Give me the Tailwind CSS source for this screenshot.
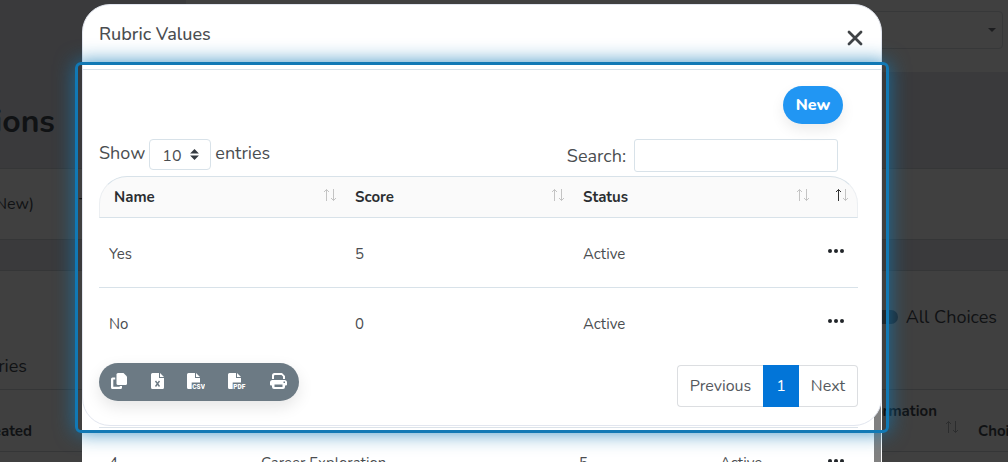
<!DOCTYPE html>
<html lang="en">
<head>
  <meta charset="UTF-8">
  <meta name="viewport" content="width=device-width, initial-scale=1.0">
  <title>Rubric Values</title>
  <script src="https://cdn.jsdelivr.net/npm/@tailwindcss/browser@4"></script>
</head>
<body class="relative h-screen overflow-hidden bg-[#3a3a3c] font-['Nunito','Lato',sans-serif] text-[#4a4d50]">

  <!-- icons -->
  <svg class="hidden">
    <symbol id="sort" viewBox="0 0 14 14">
      <path d="M3.500 13V1.500M1 4l2.500-2.500L6 4" fill="none" stroke="currentColor" />
    </symbol>
    <symbol id="sort-down" viewBox="0 0 14 14">
      <path d="M10.500 1v11.500M8 10l2.500 2.500L13 10" fill="none" stroke="currentColor" />
    </symbol>
    <symbol id="dots" viewBox="0 0 16 4">
      <circle cx="2" cy="2" r="2" /><circle cx="8" cy="2" r="2" /><circle cx="14" cy="2" r="2" />
    </symbol>
  </svg>

  <!-- dimmed page -->
  <div class="flex h-full flex-col text-[#101214]" aria-hidden="true">
    <div class="ml-[186px] flex h-[72px] shrink-0 justify-end bg-[#404040] pt-[11px] pr-[5px]">
      <div class="flex h-[38px] w-[160px] items-center justify-end rounded border border-[#373839] pr-[6px]">
        <svg class="h-1 w-2" viewBox="0 0 8 4"><path d="M0 0h8L4 4z" fill="#1c1d1f" /></svg>
      </div>
    </div>
    <div class="flex h-24 shrink-0 items-center pt-1">
      <h1 class="flex w-[55px] justify-end text-[32px] font-bold">Questions</h1>
    </div>
    <div class="flex h-[72px] shrink-0 items-center border-y border-[#353637] bg-[#404040] text-base">
      <span class="flex w-[34px] justify-end">(New)</span>
      <span class="ml-[45px]">Type</span>
    </div>
    <div class="h-[30px] shrink-0"></div>
    <div class="flex-1 border-t border-[#353637] bg-[#404040]">
      <div class="flex h-[92px] items-center justify-end gap-2 pr-[11px] text-lg">
        <span class="h-[14px] w-7 rounded-full bg-[#20282e]"></span>
        <span>All Choices</span>
      </div>
      <div class="flex h-[26px] items-start text-lg leading-none">
        <span class="-mt-[6px] flex w-[27px] justify-end">Entries</span>
      </div>
      <div class="flex h-[63px] items-end justify-between border-y border-[#353637] pb-[9px] text-[15px] font-bold">
        <span class="flex w-8 justify-end">Created</span>
        <div class="flex w-[120px] shrink-0 items-end gap-2">
          <div class="flex w-[49px] shrink-0 justify-end pb-5"><span>Information</span></div>
          <svg class="mb-2 h-[14px] w-[14px] shrink-0 text-[#2c2d2e]"><use href="#sort" /><use href="#sort-down" /></svg>
          <span class="ml-[11px]">Choices</span>
        </div>
      </div>
    </div>
  </div>

  <div class="absolute inset-0 pt-1 pr-[126px] pl-[82px]">
    <div class="relative h-full">

      <!-- dialog underneath -->
      <div class="absolute inset-x-0 top-[380px] bottom-0 overflow-hidden border-x border-white bg-[#808080] pr-[7px]">
        <div class="h-full bg-white pt-[43px] pr-4 pl-4">
          <table class="w-full table-fixed border-t border-[#dce3ea] text-[15px]">
            <tr class="h-[70px]">
              <td class="w-[152px] pl-[10px]">4</td>
              <td class="pl-[10px]">Career Exploration</td>
              <td class="w-[141px] pl-[10px]">5</td>
              <td class="w-[108px] pl-[10px]">Active</td>
              <td class="w-10 pl-[10px]"><div class="flex pb-1"><svg class="h-1 w-4 fill-[#212529]"><use href="#dots" /></svg></div></td>
            </tr>
          </table>
        </div>
      </div>

      <!-- rubric values dialog -->
      <div class="relative" role="dialog" aria-labelledby="dialogTitle">
        <div class="rounded-[28px] border border-[#e2e6ef] bg-white">
          <div class="flex h-[65px] items-center justify-between border-b border-[#d8e2e9] pr-[18px] pb-[6px] pl-4">
            <h2 id="dialogTitle" class="text-lg font-medium">Rubric Values</h2>
            <button class="mt-2" aria-label="Close">
              <svg class="h-4 w-4" viewBox="0 0 16 16"><path d="M2 2l12 12M14 2L2 14" stroke="#404346" stroke-width="2.800" stroke-linecap="round" /></svg>
            </button>
          </div>

          <div class="pt-4 pr-[23px] pb-[18px] pl-4">
            <div class="flex justify-end pr-[15px]">
              <button class="h-[38px] w-[60px] rounded-full bg-[#2196f3] text-base font-extrabold text-white shadow-[0_6px_14px_rgba(0,0,0,0.08)]">New</button>
            </div>

            <div class="mt-[15px] flex h-[37px] items-start justify-between pr-5 text-lg">
              <div class="flex items-center gap-1">
                <label for="pageLength" class="-mt-1">Show</label>
                <div class="relative">
                  <select id="pageLength" class="h-[31px] w-[62px] appearance-none rounded border border-[#d8e2e9] pt-[2px] pl-3 text-base">
                    <option>10</option>
                  </select>
                  <svg class="pointer-events-none absolute top-[10px] right-3 h-[11px] w-[9px]" viewBox="0 0 8 10"><path d="M4 0l4 4H0zM4 10l4-4H0z" fill="#343a40" /></svg>
                </div>
                <span class="-mt-1">entries</span>
              </div>
              <div class="flex items-center gap-2">
                <label for="search">Search:</label>
                <input id="search" type="search" class="h-[33px] w-[204px] rounded-[3px] border border-[#d8e2e9] px-2">
              </div>
            </div>

            <table class="w-full table-fixed border-separate border-spacing-0 text-[15px]">
              <thead class="text-left text-[#2b2e31]">
                <tr class="h-[42px]">
                  <th class="w-[246px] rounded-tl-[28px] border-y border-l border-[#d8e2e9] border-l-[#eceff2] bg-[#fafafa] pr-2 pl-[14px]">
                    <div class="flex justify-between">Name <svg class="mt-[2px] h-[14px] w-[14px] text-[#c4c4c4]"><use href="#sort" /><use href="#sort-down" /></svg></div>
                  </th>
                  <th class="w-[228px] border-y border-[#d8e2e9] bg-[#fafafa] pr-2 pl-[10px]">
                    <div class="flex justify-between">Score <svg class="mt-[2px] h-[14px] w-[14px] text-[#c4c4c4]"><use href="#sort" /><use href="#sort-down" /></svg></div>
                  </th>
                  <th class="border-y border-[#d8e2e9] bg-[#fafafa] pr-2 pl-[10px]">
                    <div class="flex justify-between">Status <svg class="mt-[2px] h-[14px] w-[14px] text-[#c4c4c4]"><use href="#sort" /><use href="#sort-down" /></svg></div>
                  </th>
                  <th class="w-10 rounded-tr-[28px] border-y border-r border-[#d8e2e9] border-r-[#eceff2] bg-[#fafafa] pr-2">
                    <div class="flex justify-end pb-1"><svg class="h-[14px] w-[14px]"><use href="#sort" class="text-[#333]" /><use href="#sort-down" class="text-[#c4c4c4]" /></svg></div>
                  </th>
                </tr>
              </thead>
              <tbody>
                <tr class="h-[70px]">
                  <td class="border-b border-[#d8e2e9] pt-1 pl-[10px]">Yes</td>
                  <td class="border-b border-[#d8e2e9] pt-1 pl-[10px]">5</td>
                  <td class="border-b border-[#d8e2e9] pt-1 pl-[10px]">Active</td>
                  <td class="border-b border-[#d8e2e9] pl-[10px]">
                    <button class="flex pb-1" aria-label="Actions"><svg class="h-1 w-4 fill-[#212529]"><use href="#dots" /></svg></button>
                  </td>
                </tr>
                <tr class="h-[70px]">
                  <td class="border-b border-transparent pt-1 pl-[10px]">No</td>
                  <td class="border-b border-transparent pt-1 pl-[10px]">0</td>
                  <td class="border-b border-transparent pt-1 pl-[10px]">Active</td>
                  <td class="border-b border-transparent pl-[10px]">
                    <button class="flex pb-1" aria-label="Actions"><svg class="h-1 w-4 fill-[#212529]"><use href="#dots" /></svg></button>
                  </td>
                </tr>
              </tbody>
            </table>

            <div class="mt-[5px] flex h-[44px] items-start justify-between">
              <div class="flex h-[38px] overflow-hidden rounded-full bg-[#6c7a84] pb-[2px] text-white shadow-[0_6px_16px_rgba(0,0,0,0.10)]">
                <button class="flex w-10 items-center justify-center" aria-label="Copy">
                  <svg class="h-4 w-4" viewBox="0 0 16 16" fill="currentColor">
                    <path d="M7 0h5.500L16 3.500V10.500a1.500 1.500 0 0 1-1.500 1.500H7a1.500 1.500 0 0 1-1.500-1.500v-9A1.500 1.500 0 0 1 7 0z" />
                    <path d="M1.500 4.500h2.700v2H2.300v7.200h6.400v-.700H11v1.500a1.500 1.500 0 0 1-1.500 1.500h-8A1.500 1.500 0 0 1 0 14.500V6a1.500 1.500 0 0 1 1.500-1.500z" />
                  </svg>
                </button>
                <button class="flex w-9 items-center justify-center" aria-label="Excel">
                  <svg class="h-4 w-[13px]" viewBox="0 0 13 16">
                    <path d="M1.500 0H8v5h5v9.500a1.500 1.500 0 0 1-1.500 1.500h-10A1.500 1.500 0 0 1 0 14.500v-13A1.500 1.500 0 0 1 1.500 0zM9 0l4 4H9z" fill="currentColor" />
                    <path d="M4.500 8l4 5.500M8.500 8l-4 5.500" stroke="#6c7a84" stroke-width="1.400" />
                  </svg>
                </button>
                <button class="flex w-[41px] items-center justify-center" aria-label="CSV">
                  <svg class="h-4 w-[18px]" viewBox="0 0 18 16" fill="currentColor">
                    <path d="M1.500 0H8v5h5v4.500H4.700V16H1.500A1.500 1.500 0 0 1 0 14.500v-13A1.500 1.500 0 0 1 1.500 0zM9 0l4 4H9z" />
                    <text x="5.300" y="15.900" font-size="6.500" font-weight="900" font-family="Roboto">CSV</text>
                  </svg>
                </button>
                <button class="flex w-[41px] items-center justify-center" aria-label="PDF">
                  <svg class="h-4 w-[18px]" viewBox="0 0 18 16" fill="currentColor">
                    <path d="M1.500 0H8v5h5v4.500H4.700V16H1.500A1.500 1.500 0 0 1 0 14.500v-13A1.500 1.500 0 0 1 1.500 0zM9 0l4 4H9z" />
                    <text x="5.300" y="15.900" font-size="6.500" font-weight="900" font-family="Roboto">PDF</text>
                  </svg>
                </button>
                <button class="flex w-[42px] items-center justify-center" aria-label="Print">
                  <svg class="h-4 w-[17px]" viewBox="0 0 17 16" fill="currentColor">
                    <path d="M2 6V2.500A2.500 2.500 0 0 1 4.500 0H12l3 3v3h-2V3.500L11.500 2h-6.500a1 1 0 0 0-1 1v3z" />
                    <path fill-rule="evenodd" d="M2.500 7h12A2.500 2.500 0 0 1 17 9.500v2a1 1 0 0 1-1 1h-1V14a2 2 0 0 1-2 2H4a2 2 0 0 1-2-2v-1.500H1a1 1 0 0 1-1-1v-2A2.500 2.500 0 0 1 2.500 7zM4.500 11.500V14h8v-2.500zM13.500 8.500V10H15V8.500z" />
                  </svg>
                </button>
              </div>

              <nav class="mt-[2px] flex h-[42px] text-base" aria-label="Pages">
                <a href="#" class="flex w-[86px] items-center justify-center rounded-l border border-r-0 border-[#dcdee1] text-[#55595e]">Previous</a>
                <a href="#" class="flex w-9 items-center justify-center bg-[#0275d8] text-white">1</a>
                <a href="#" class="flex w-[59px] items-center justify-center rounded-r border border-l-0 border-[#dcdee1] text-[#55595e]">Next</a>
              </nav>
            </div>
          </div>
        </div>

        <!-- step highlight -->
        <div class="pointer-events-none absolute -inset-x-[7px] top-[58px] -bottom-[7px] rounded-md border-3 border-[#1179b5] shadow-[0_0_20px_#1179b5cc]"></div>
      </div>
    </div>
  </div>
</body>
</html>
